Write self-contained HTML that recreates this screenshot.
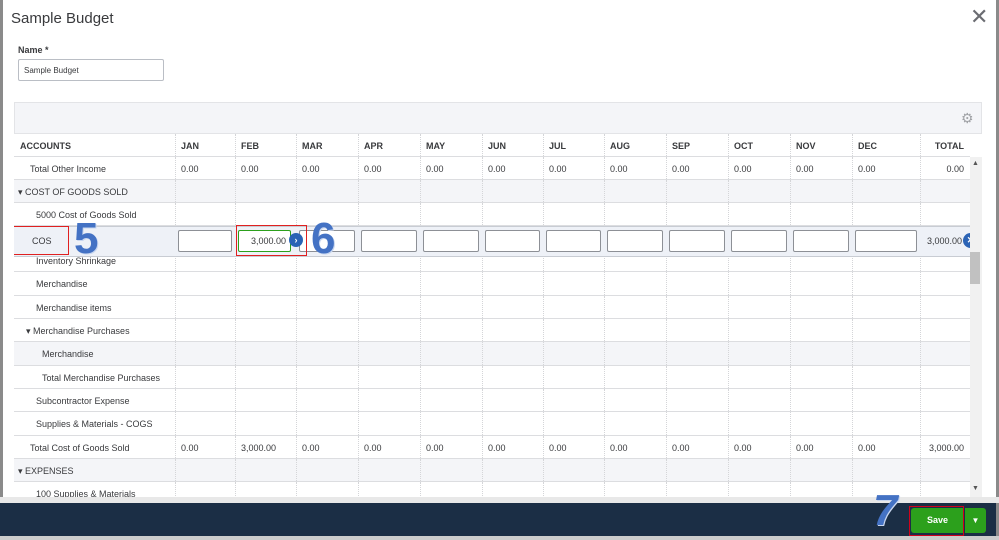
<!DOCTYPE html>
<html><head><style>
*{margin:0;padding:0;box-sizing:border-box}
body{width:999px;height:540px;overflow:hidden;background:#fff;font-family:"Liberation Sans",sans-serif;position:relative;color:#393a3d}
.a{position:absolute}
.t{font-size:9px;color:#393a3d;white-space:nowrap}
.row{position:absolute;left:0;width:956px;border-bottom:1px solid #dcdde0}
.cl{position:absolute;top:0;bottom:0;border-left:1px dotted #d4d5d8}
.inp{position:absolute;height:22px;border:1px solid #8d9096;background:#fff;border-radius:2px}
</style></head><body>
<div class="a" style="left:0;top:0;width:3px;height:540px;background:#8a8a8a"></div>
<div class="a" style="left:996px;top:0;width:3px;height:540px;background:#8a8a8a"></div>
<div class="a" style="left:11px;top:10px;font-size:15px;color:#393a3d">Sample Budget</div>
<div class="a" style="left:970px;top:4px;font-size:22px;color:#6b6c72">✕</div>
<div class="a t" style="left:18px;top:45px;font-size:9px;font-weight:bold">Name *</div>
<div class="a" style="left:18px;top:59px;width:146px;height:22px;border:1px solid #babec5;border-radius:2px;font-size:8px;padding:6px 5px">Sample Budget</div>
<div class="a" style="left:14px;top:102px;width:968px;height:32px;background:#f4f5f8;border:1px solid #e3e4e7"></div>
<div class="a" style="left:961px;top:110px;font-size:14px;color:#a0a2a6">⚙</div>
<div class="a" style="left:14px;top:134px;width:956px;height:363px;background:#fff;overflow:hidden" id="g"></div>
<div class="a" style="left:970px;top:157px;width:12px;height:340px;background:#f1f1f1"></div>
<div class="a" style="left:970px;top:252px;width:10px;height:32px;background:#c1c1c1"></div>
<div class="a" style="left:972px;top:160px;font-size:7px;color:#555">▲</div>
<div class="a" style="left:972px;top:485px;font-size:7px;color:#555">▼</div>
<div class="a" style="left:0;top:497px;width:999px;height:6px;background:#e8e8e8"></div>
<div class="a" style="left:0;top:503px;width:996px;height:33px;background:#1b2e45"></div>
<div class="a" style="left:0;top:536px;width:999px;height:4px;background:#ccc"></div>
<div class="a" style="left:911px;top:508px;width:53px;height:25px;background:#2ca01c;border-radius:3px 0 0 3px;color:#fff;font-size:9px;font-weight:bold;text-align:center;line-height:25px">Save</div>
<div class="a" style="left:965px;top:508px;width:21px;height:25px;background:#2ca01c;border-radius:0 3px 3px 0;color:#fff;font-size:8px;text-align:center;line-height:25px">▼</div>
<div class="a" style="left:909px;top:506px;width:55px;height:30px;border:1px solid #d0021b"></div>
<div class="a" style="left:873px;top:486px;font-size:44px;font-weight:bold;font-style:italic;color:#4472c4;text-shadow:1px 1px 0 #c8d6ef">7</div>
<script>
var cols=[0,161,221,282,344,406,468,529,590,652,714,776,838,906,956];
var names=["ACCOUNTS","JAN","FEB","MAR","APR","MAY","JUN","JUL","AUG","SEP","OCT","NOV","DEC","TOTAL"];
var g=document.getElementById('g'),h='';
function row(top,ht,bg,label,indent,vals,bold){
 h+='<div class="row" style="top:'+top+'px;height:'+ht+'px;background:'+bg+'">';
 for(var i=1;i<14;i++)h+='<div class="cl" style="left:'+cols[i]+'px"></div>';
 h+='<div class="a t" style="left:'+indent+'px;top:'+(ht/2-5)+'px;'+(bold?'font-weight:bold;':'')+'">'+label+'</div>';
 if(vals)for(var i=1;i<14;i++){var v=vals[i-1];if(v==null)continue;
  if(i==13)h+='<div class="a t" style="right:6px;top:'+(ht/2-5)+'px;'+(bold?'font-weight:bold;':'')+'">'+v+'</div>';
  else h+='<div class="a t" style="left:'+(cols[i]+6)+'px;top:'+(ht/2-5)+'px;'+(bold?'font-weight:bold;':'')+'">'+v+'</div>';}
 h+='</div>';}
var z=[];for(var i=0;i<13;i++)z.push('0.00');
var hd=[];for(var i=1;i<13;i++)hd.push(names[i]);hd.push('TOTAL');
row(0,23,'#fff','ACCOUNTS',6,hd,true);
row(23,23,'#fff','Total Other Income',16,z);
row(46,23,'#f4f5f8','▾ COST OF GOODS SOLD',4);
row(69,23,'#fff','5000 Cost of Goods Sold',22);
row(92,23,'#fff','',22);
row(115,23,'#fff','Inventory Shrinkage',22);
row(138,24,'#fff','Merchandise',22);
row(162,23,'#fff','Merchandise items',22);
row(185,23,'#fff','▾ Merchandise Purchases',12);
row(208,24,'#f4f5f8','Merchandise',28);
row(232,23,'#fff','Total Merchandise Purchases',28);
row(255,23,'#fff','Subcontractor Expense',22);
row(278,24,'#fff','Supplies &amp; Materials - COGS',22);
var t=z.slice();t[1]='3,000.00';t[12]='3,000.00';
row(302,23,'#fff','Total Cost of Goods Sold',16,t);
row(325,23,'#f4f5f8','▾ EXPENSES',4);
row(348,23,'#fff','100 Supplies &amp; Materials',22);
h+='<div class="a" style="left:0;top:92px;width:968px;height:31px;background:#eef1f7;border-top:1px solid #c8ccd3;border-bottom:1px solid #c8ccd3"></div>';
h+='<div class="a t" style="left:18px;top:102px">COS</div>';
for(var i=1;i<13;i++){var l=cols[i]+3,w=cols[i+1]-cols[i]-6;
 if(i==2){h+='<div class="inp" style="left:'+l+'px;top:96px;width:'+(w-2)+'px;border-color:#2ca01c;font-size:9px;text-align:right;padding:5px 4px">3,000.00</div>';}
 else h+='<div class="inp" style="left:'+l+'px;top:96px;width:'+w+'px"></div>';}
h+='<div class="a" style="left:275px;top:99px;width:14px;height:14px;border-radius:50%;background:#2b63b5;color:#fff;font-size:9px;text-align:center;line-height:14px;font-weight:bold">›</div>';
h+='<div class="a t" style="left:913px;top:102px">3,000.00</div>';
h+='<div class="a" style="left:949px;top:99px;width:15px;height:15px;border-radius:50%;background:#2b63b5;color:#fff;font-size:9px;text-align:center;line-height:15px;font-weight:bold">✕</div>';
h+='<div class="a" style="left:-1px;top:92px;width:56px;height:29px;border:1px solid #e02020"></div>';
h+='<div class="a" style="left:222px;top:91px;width:71px;height:31px;border:1px solid #e02020"></div>';
h+='<div class="a" style="left:60px;top:80px;font-size:44px;font-weight:bold;color:#4472c4;text-shadow:1px 1px 0 #c8d6ef">5</div>';
h+='<div class="a" style="left:297px;top:80px;font-size:44px;font-weight:bold;color:#4472c4;text-shadow:1px 1px 0 #c8d6ef">6</div>';
g.innerHTML=h;
</script>
</body></html>
